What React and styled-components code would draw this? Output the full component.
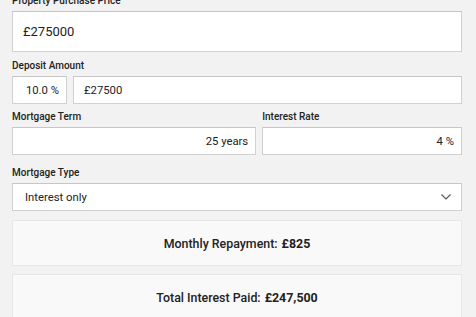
import styled, { createGlobalStyle } from "styled-components";

const GlobalStyle = createGlobalStyle`
    html, body {
        margin: 0;
        padding: 0;
        background: #f2f2f2;
        font-family: Roboto, "Liberation Sans", Arial, sans-serif;
        color: #222;
        overflow: hidden;
    }
`

const Calculator = styled.main`
    display: flex;
    flex-direction: column;
    padding: 0 14px 0 12px;
    margin-top: -6px;
`

const Field = styled.div`
    display: flex;
    flex-direction: column;
    gap: 4px;
    margin-bottom: ${props => props.$space || 0}px;
    flex: ${props => props.$grow || "none"};
    min-width: 0;
`

const Label = styled.label`
    font-size: 10px;
    line-height: 13px;
    font-weight: 500;
    color: #222;
`

const Row = styled.div`
    display: flex;
    gap: 6px;
    margin-bottom: ${props => props.$space || 0}px;
`

const Box = styled.div`
    box-sizing: border-box;
    display: flex;
    align-items: center;
    justify-content: ${props => props.$right ? "flex-end" : "flex-start"};
    height: ${props => props.$tall ? 41 : 28}px;
    padding: 0 ${props => props.$right ? 7 : 10}px 0 ${props => props.$pad || 10}px;
    background: #fff;
    border: 1px solid #d0d0d0;
    border-top-color: #c6c6c6;
    font-size: ${props => props.$tall ? 13 : 11.3}px;
    color: #222;
    white-space: nowrap;
    width: ${props => props.$width ? props.$width + "px" : "auto"};
    flex: ${props => props.$fill ? "1 1 auto" : "none"};
`

const Select = styled(Box)`
    justify-content: space-between;
    padding: 0 10px 0 12px;
`

const Result = styled.section`
    box-sizing: border-box;
    display: flex;
    justify-content: center;
    align-items: center;
    height: 46px;
    margin-bottom: 8px;
    background: #f9f9f9;
    border: 1px solid #e7e7e7;
    font-size: 12.4px;
    font-weight: 500;
    color: #222;

    & strong {
        font-weight: 700;
        margin-left: 4px;
    }
`

const Chevron = () => (
    <svg width="10" height="6" viewBox="0 0 10 6" fill="none">
        <polyline points="0.5,0.5 5,5 9.5,0.5" stroke="#555" strokeWidth="1.1" />
    </svg>
)

const App = () => {
    return (
        <Calculator>
            <GlobalStyle />
            <Field $space={7}>
                <Label>Property Purchase Price</Label>
                <Box $tall $pad={10}>£275000</Box>
            </Field>
            <Field $space={6}>
                <Label>Deposit Amount</Label>
                <Row>
                    <Box $right $width={55}>10.0 %</Box>
                    <Box $fill>£27500</Box>
                </Row>
            </Field>
            <Row $space={11}>
                <Field $grow="55">
                    <Label>Mortgage Term</Label>
                    <Box $right>25 years</Box>
                </Field>
                <Field $grow="45">
                    <Label>Interest Rate</Label>
                    <Box $right>4 %</Box>
                </Field>
            </Row>
            <Field $space={9}>
                <Label>Mortgage Type</Label>
                <Select>
                    <span>Interest only</span>
                    <Chevron />
                </Select>
            </Field>
            <Result>Monthly Repayment: <strong>£825</strong></Result>
            <Result>Total Interest Paid: <strong>£247,500</strong></Result>
        </Calculator>
    );
}

export default App;
